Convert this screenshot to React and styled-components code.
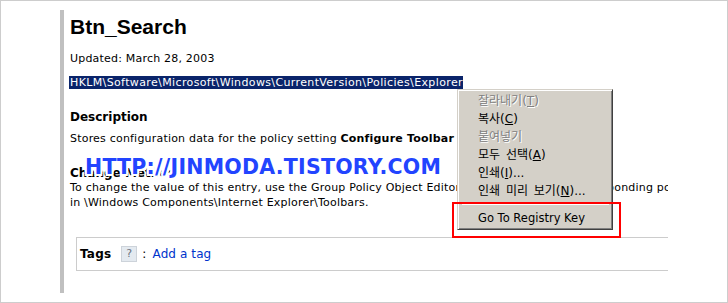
import React from "react";
import styled, { createGlobalStyle } from "styled-components";

const Global = createGlobalStyle`
  html, body { margin: 0; padding: 0; background: #fff; }
  body { font-family: "DejaVu Sans", Verdana, sans-serif; }
`;

const Frame = styled.div`
  position: relative;
  box-sizing: border-box;
  width: 728px;
  height: 303px;
  border: 1px solid #cdcdcd;
  padding: 9px 0 0 59px;
  overflow: hidden;
  background: #fff;
`;

const Article = styled.div`
  position: relative;
  box-sizing: border-box;
  width: 608px;
  height: 283px;
  border-left: 4px solid #c0c0c0;
  padding-left: 6px;
  overflow: hidden;
  color: #000;
`;

const Inner = styled.div`
  width: 900px;
  display: flex;
  flex-direction: column;
  align-items: flex-start;
  letter-spacing: 0.2px;
`;

const Title = styled.h1`
  margin: 5px 0 0;
  font-family: "Liberation Sans", Arial, sans-serif;
  font-weight: bold;
  font-size: 21px;
  line-height: 24px;
  letter-spacing: 0;
`;

const Text = styled.div`
  margin-top: ${(p) => p.$mt || 0}px;
  font-size: 11px;
  line-height: ${(p) => p.$lh || 13}px;
  letter-spacing: ${(p) => p.$ls || 0.2}px;
  white-space: nowrap;
  b { font-weight: bold; }
`;

const Selected = styled.span`
  background: #0a246a;
  color: #fff;
  padding-left: 1px;
  margin-left: -1px;
`;

const Heading = styled.h2`
  position: relative;
  margin: ${(p) => p.$mt}px 0 0;
  font-size: 12px;
  line-height: 15px;
  font-weight: bold;
  letter-spacing: 0;
  &::before {
    content: "";
    display: ${(p) => (p.$dotted ? "block" : "none")};
    position: absolute;
    left: -9px;
    top: -8px;
    height: 18px;
    border-left: 2px dotted #ffffff;
  }
`;

const TagsBox = styled.div`
  margin: 27px 0 0 6px;
  box-sizing: border-box;
  width: 800px;
  height: 34px;
  border: 1px solid #cccccc;
  display: flex;
  align-items: center;
  padding: 0 0 0 3px;
  font-size: 12px;
`;

const TagsLabel = styled.span`
  font-weight: bold;
  margin-right: 10px;
`;

const Help = styled.span`
  box-sizing: border-box;
  width: 16px;
  height: 16px;
  border: 1px solid #cdd3da;
  background: #e4eaf0;
  color: #6a7480;
  font-size: 11px;
  line-height: 14px;
  text-align: center;
  letter-spacing: 0;
`;

const Colon = styled.span`
  margin: 0 6px 0 5px;
`;

const Link = styled.a`
  color: #0033cc;
  text-decoration: none;
  letter-spacing: 0.1px;
`;

const Watermark = styled.div`
  position: absolute;
  left: 21px;
  top: 147px;
  font-family: "DejaVu Sans", Verdana, sans-serif;
  font-weight: bold;
  font-size: 20.5px;
  line-height: 20.5px;
  letter-spacing: 0.25px;
  color: #2244ff;
  white-space: nowrap;
  text-shadow: 1px 0 0 #fff, -1px 0 0 #fff, 0 1px 0 #fff, 0 -1px 0 #fff,
    1px 1px 0 #fff, -1px -1px 0 #fff, 1px -1px 0 #fff, -1px 1px 0 #fff,
    2px 0 0 #fff, -2px 0 0 #fff, 0 2px 0 #fff, 0 -2px 0 #fff,
    2px 2px 0 #fff, -2px -2px 0 #fff, 2px -2px 0 #fff, -2px 2px 0 #fff;
`;

const Menu = styled.div`
  position: absolute;
  left: 456px;
  top: 88px;
  box-sizing: border-box;
  width: 156px;
  height: 141px;
  background: #d4d0c8;
  border: 1px solid;
  border-color: #d4d0c8 #404040 #404040 #d4d0c8;
  box-shadow: inset 1px 1px 0 #ffffff, inset -1px -1px 0 #808080;
  padding: 2px 1px;
  display: flex;
  flex-direction: column;
  font-family: "DejaVu Sans", "Noto Sans CJK KR", sans-serif;
  font-size: 12px;
`;

const Item = styled.div`
  height: 18px;
  line-height: 18px;
  padding-left: 19px;
  white-space: nowrap;
  word-spacing: ${(p) => (p.$latin ? "0" : "2px")};
  color: ${(p) => (p.$disabled ? "#808080" : "#000")};
  text-shadow: ${(p) => (p.$disabled ? "1px 1px 0 #ffffff" : "none")};
  font-size: ${(p) => (p.$latin ? "11.5px" : "12px")};
`;

const Separator = styled.div`
  margin: 3px 2px 4px 3px;
  height: 0;
  border-top: 1px solid #808080;
  border-bottom: 1px solid #ffffff;
`;

const Highlight = styled.div`
  position: absolute;
  left: 451px;
  top: 201px;
  box-sizing: border-box;
  width: 169px;
  height: 36px;
  border: 2px solid #ff0000;
`;

export default function App() {
  return (
    <>
      <Global />
      <Frame>
        <Article>
          <Inner>
            <Title>Btn_Search</Title>
            <Text $mt={13}>Updated: March 28, 2003</Text>
            <Text $mt={11} $ls={0.37}>
              <Selected>
                HKLM\Software\Microsoft\Windows\CurrentVersion\Policies\Explorer{" "}
              </Selected>
            </Text>
            <Heading $mt={21}>Description</Heading>
            <Text $mt={7}>
              Stores configuration data for the policy setting{" "}
              <b>Configure Toolbar Buttons</b>.
            </Text>
            <Heading $mt={21} $dotted>
              Change Method
            </Heading>
            <Text $mt={-1} $lh={15}>
              To change the value of this entry, use the Group Policy Object
              Editor to configure every corresponding policy setting
              <br />
              in \Windows Components\Internet Explorer\Toolbars.
            </Text>
            <TagsBox>
              <TagsLabel>Tags</TagsLabel>
              <Help>?</Help>
              <Colon>:</Colon>
              <Link href="#">Add a tag</Link>
            </TagsBox>
          </Inner>
          <Watermark>HTTP://JINMODA.TISTORY.COM</Watermark>
        </Article>
        <Menu>
          <Item $disabled>
            잘라내기(<u>T</u>)
          </Item>
          <Item>
            복사(<u>C</u>)
          </Item>
          <Item $disabled>붙여넣기</Item>
          <Item>
            모두 선택(<u>A</u>)
          </Item>
          <Item>
            인쇄(<u>I</u>)...
          </Item>
          <Item>
            인쇄 미리 보기(<u>N</u>)...
          </Item>
          <Separator />
          <Item $latin>Go To Registry Key</Item>
        </Menu>
        <Highlight />
      </Frame>
    </>
  );
}
